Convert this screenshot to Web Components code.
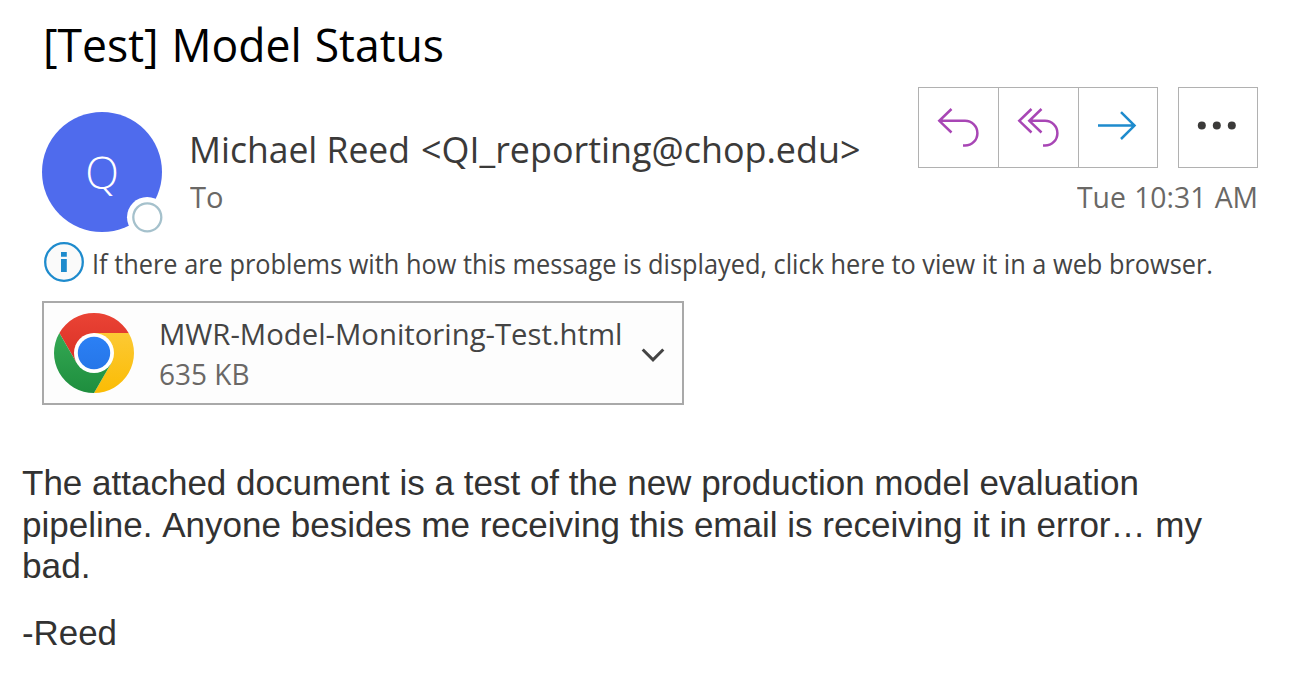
<!DOCTYPE html>
<html lang="en">
<head>
<meta charset="utf-8">
<title>[Test] Model Status</title>
<style>
html,body{margin:0;background:#fff}
body{font-family:"Open Sans","Noto Sans",sans-serif;color:#3b3a39;overflow:hidden}
</style>
</head>
<body>
<mail-page></mail-page>
<script>
const define = (name, html, ready) => {
  const t = document.createElement('template');
  t.innerHTML = html;
  customElements.define(name, class extends HTMLElement {
    connectedCallback() {
      if (this.shadowRoot) return;
      this.attachShadow({mode:'open'}).append(t.content.cloneNode(true));
      if (ready) ready.call(this, this.shadowRoot);
    }
  });
};

// One line of text, condensed or widened to the measure given in "w".
define('fit-line', `<style>
:host{display:block;white-space:nowrap}
span{display:inline-block;transform-origin:0 50%}
</style><span><slot></slot></span>`, function (root) {
  const s = root.querySelector('span');
  const w = +this.getAttribute('w');
  if (w) {
    this.style.width = w + 'px';
    s.style.transform = `scaleX(${w / s.getBoundingClientRect().width})`;
  }
});

define('user-avatar', `<style>
:host{display:block;position:relative;width:120px;height:120px}
.disc{width:120px;height:120px;border-radius:50%;background:#4f6bed;color:#fff;display:flex;justify-content:center;font:350 44px/121px "Open Sans",sans-serif}
svg{position:absolute;left:84px;top:84px}
</style><div class="disc"><slot></slot></div>
<svg width="38" height="38"><circle cx="21.2" cy="21.2" r="20.2" fill="#fff"/><circle cx="21.3" cy="21.3" r="14" fill="#fff" stroke="#a5c1cc" stroke-width="2.3"/></svg>`);

define('mail-actions', `<style>
:host{display:flex;gap:20px}
.g{display:flex;box-sizing:border-box;height:81px;border:1px solid #b1b1b1}
.c{width:79px;border-right:1px solid #b1b1b1}
.c:last-child{width:78px;border:0}
svg{display:block;fill:none;stroke-width:2.5}
</style>
<div class="g">
<div class="c"><svg width="78" height="79" stroke="#a846b5"><path d="M32.5 21 20.3 32.8 32.5 44.5M20.3 32.8H46A12.4 12.4 0 0 1 46 57.6H44"/></svg></div>
<div class="c"><svg width="78" height="79" stroke="#a846b5"><path d="M32.5 21 20.3 32.8 32.5 44.5M42.5 21 30.3 32.8 42.5 44.5M30.3 32.8H46A12.4 12.4 0 0 1 46 57.6H44"/></svg></div>
<div class="c"><svg width="78" height="79" stroke="#1e8bcd"><path d="M19 37.6H55.5M42 24.2 55.5 37.6 42 51"/></svg></div>
</div>
<div class="g"><div class="c"><svg width="78" height="79"><g fill="#3b3a39"><circle cx="22.8" cy="37.6" r="4"/><circle cx="37.8" cy="37.6" r="4"/><circle cx="52.8" cy="37.6" r="4"/></g></svg></div></div>`);

define('mail-header', `<style>
:host{display:grid;grid-template-columns:120px 1fr auto;padding:9px 39px 0 42px;height:145px}
user-avatar{margin-top:25px}
.who{padding:38px 0 0 27px}
.name{display:flex;gap:10.5px;font-size:36.5px;line-height:48px}
.to{font-size:29.5px;line-height:36px;color:#6a6866;margin:6px 0 0 .5px}
.side{display:flex;flex-direction:column;align-items:flex-end}
.time{font-size:29.5px;line-height:36px;color:#6a6866;margin-top:11px;word-spacing:1px}
</style>
<user-avatar>Q</user-avatar>
<div class="who"><div class="name"><fit-line w="221">Michael Reed</fit-line><fit-line w="439.5">&lt;QI_reporting@chop.edu&gt;</fit-line></div><fit-line class="to" w="33.5">To</fit-line></div>
<div class="side"><mail-actions></mail-actions><fit-line class="time" w="181">Tue 10:31 AM</fit-line></div>`);

define('info-bar', `<style>
:host{display:flex;padding:10px 0 0 44px;height:59px;gap:8px;font-size:27px;line-height:40px;color:#444}
fit-line{margin-top:2px}
</style>
<svg width="40" height="40"><circle cx="20" cy="20" r="18.8" fill="#fafafa" stroke="#1e8bcd" stroke-width="2.3"/><path d="M17 10h5.8v4.8h-5.8zM17 17h5.8v13h-5.8z" fill="#1e8bcd"/></svg>
<fit-line w="1121"><slot></slot></fit-line>`);

define('file-card', `<style>
:host{display:flex;box-sizing:border-box;width:642px;height:104px;margin-left:42px;border:2px solid #a9a9a9;background:#fdfdfd;padding:10px;font-size:29px;line-height:40px;color:#444}
.t{margin:1px 0 0 24.5px;width:479.5px}
.s{color:#6a6866}
.v{margin-top:32px}
</style>
<svg width="80" height="80">
<defs>
<linearGradient id="r" x1="0" y1="0" x2="0" y2="1"><stop stop-color="#ea4335"/><stop offset="1" stop-color="#d93025"/></linearGradient>
<linearGradient id="y" x1="0" y1="0" x2="0" y2="1"><stop stop-color="#fcc934"/><stop offset="1" stop-color="#fbbc04"/></linearGradient>
<linearGradient id="g" x1="0" y1="0" x2="0" y2="1"><stop stop-color="#34a853"/><stop offset="1" stop-color="#1e8e3e"/></linearGradient>
<linearGradient id="b" x1="0" y1="0" x2="0" y2="1"><stop stop-color="#2b80f5"/><stop offset="1" stop-color="#2676e8"/></linearGradient>
</defs>
<path d="M5.36 20A40 40 0 0 1 74.64 20H40L22.68 50Z" fill="url(#r)"/>
<path d="M74.64 20A40 40 0 0 1 40 80L57.32 50 40 20Z" fill="url(#y)"/>
<path d="M40 80A40 40 0 0 1 5.36 20L22.68 50 57.32 50Z" fill="url(#g)"/>
<circle cx="40" cy="40" r="20" fill="#fff"/><circle cx="40" cy="40" r="16.2" fill="url(#b)"/>
</svg>
<div class="t"><fit-line w="463.5"><slot name="file"></slot></fit-line><fit-line class="s" w="90.5"><slot name="size"></slot></fit-line></div>
<svg class="v" width="28" height="20"><path d="M4.7 4.5 15 14.8 25.3 4.5" fill="none" stroke="#444" stroke-width="3" /></svg>`);

define('mail-body', `<style>
:host{display:block;margin:57px 0 0 22px;font:35px/41.5px "Liberation Sans",Arial,sans-serif;font-kerning:none;color:#323232}
.p{margin-bottom:25.5px}
</style>
<div class="p"><fit-line w="1117">The attached document is a test of the new production model evaluation</fit-line><fit-line w="1180">pipeline. Anyone besides me receiving this email is receiving it in error… my</fit-line><fit-line w="68.5">bad.</fit-line></div>
<fit-line w="95">-Reed</fit-line>`);

define('mail-page', `<style>
:host{display:flex;flex-direction:column;width:1297px;height:695px}
.title{margin:10px 0 0 42px;padding-left:1px;font-size:46px;line-height:68px;color:#000;word-spacing:1.5px}
</style>
<fit-line class="title" w="401">[Test] Model Status</fit-line>
<mail-header></mail-header>
<info-bar>If there are problems with how this message is displayed, click here to view it in a web browser.</info-bar>
<file-card><span slot="file">MWR-Model-Monitoring-Test.html</span><span slot="size">635 KB</span></file-card>
<mail-body></mail-body>`);
</script>
</body>
</html>
